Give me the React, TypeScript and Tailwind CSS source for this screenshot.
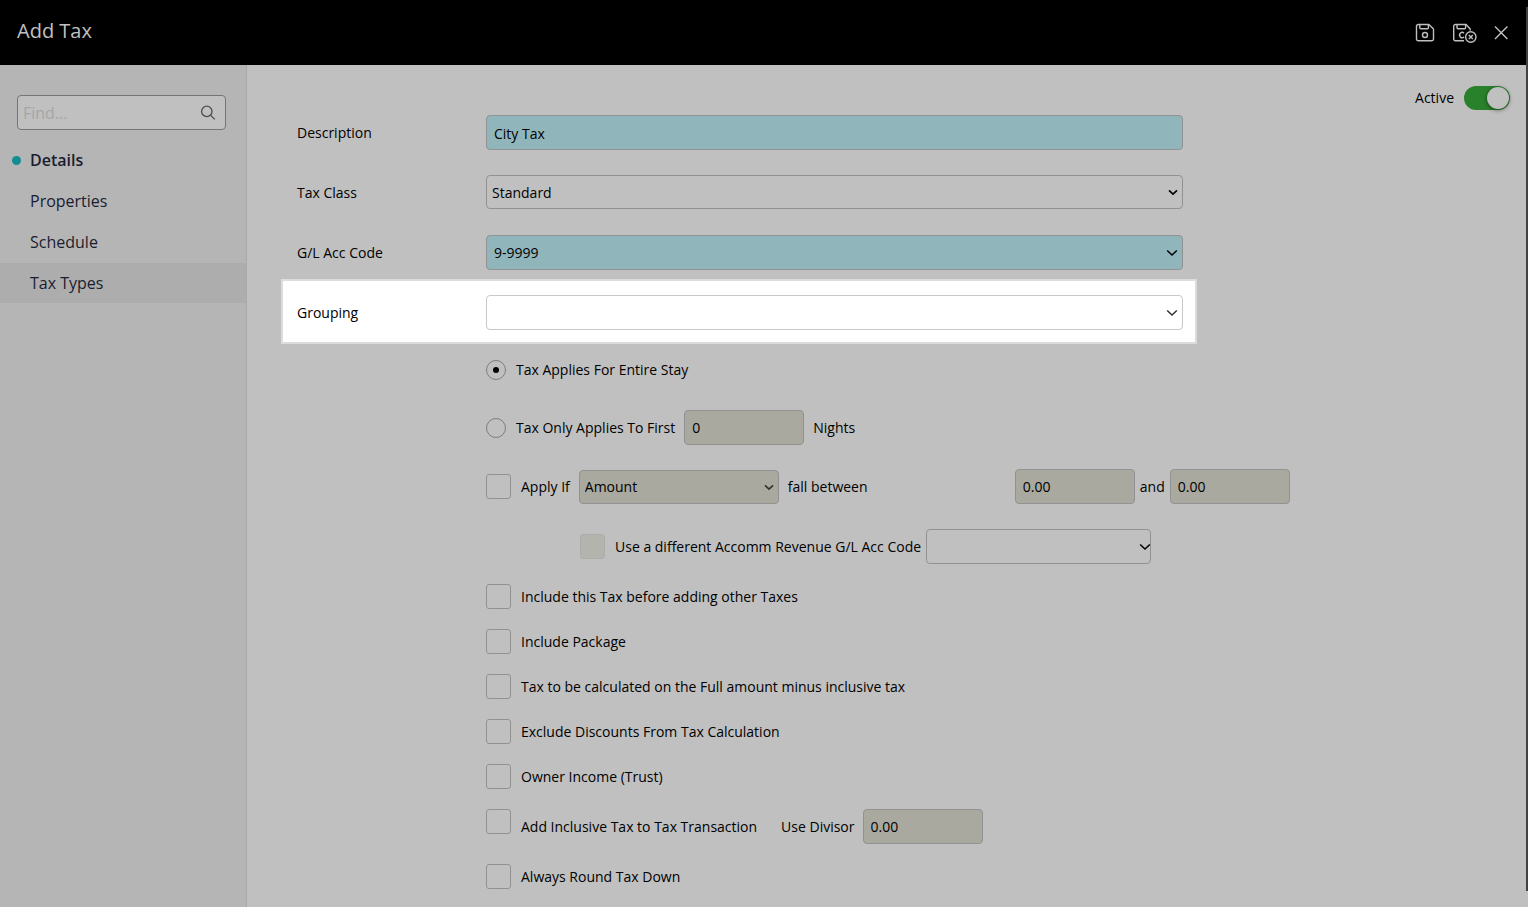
import React, { useState } from 'react';
import { clsx, type ClassValue } from 'clsx';
import { twMerge } from 'tailwind-merge';

function cn(...inputs: ClassValue[]) {
  return twMerge(clsx(inputs));
}

const navItems = ['Details', 'Properties', 'Schedule', 'Tax Types'];

const SaveIcon = () => (
  <svg className="w-5 h-5" viewBox="0 0 20 20" fill="none" stroke="currentColor" strokeWidth="1.4" strokeLinejoin="round">
    <path d="M3.3 1.5h10.6L18.5 6v10a1.8 1.8 0 0 1-1.8 1.8H3.3A1.8 1.8 0 0 1 1.5 16V3.3a1.8 1.8 0 0 1 1.8-1.8z" />
    <path d="M4.8 1.6v3.2a1 1 0 0 0 1 1h6.6a1 1 0 0 0 1-1V1.6" />
    <circle cx="10" cy="12" r="2.5" />
  </svg>
);

const SaveCloseIcon = () => (
  <svg className="w-6 h-5" viewBox="0 0 24 20" fill="none" stroke="currentColor" strokeWidth="1.4" strokeLinejoin="round">
    <path d="M11 17.8H2.5A1.8 1.8 0 0 1 .7 16V3.3a1.8 1.8 0 0 1 1.8-1.8h10.6L17.2 6v1.6" />
    <path d="M4 1.6v3.2a1 1 0 0 0 1 1h6.6a1 1 0 0 0 1-1V1.6" />
    <path d="M11 10.2a2.6 2.6 0 1 0 0 3.8" />
    <circle cx="17.8" cy="14" r="5.2" />
    <path d="M15.8 12l4 4M19.8 12l-4 4" />
  </svg>
);

const CloseIcon = () => (
  <svg className="w-4 h-4" viewBox="0 0 16 16" fill="none" stroke="currentColor" strokeWidth="1.4">
    <path d="M2 1.6l12.4 12.4M14.4 1.6L2 14" />
  </svg>
);

const SearchIcon = () => (
  <svg className="w-4 h-4" viewBox="0 0 16 16" fill="none" stroke="currentColor" strokeWidth="1.3">
    <circle cx="6.8" cy="6.4" r="5.2" />
    <path d="M10.5 10.1l4.3 4.3" />
  </svg>
);

interface SelectProps extends React.SelectHTMLAttributes<HTMLSelectElement> {
  wrapperClass?: string;
  arrowClass?: string;
  options: string[];
}

const Select: React.FC<SelectProps> = ({ wrapperClass, arrowClass, options, className, ...props }) => (
  <div className={cn('relative', wrapperClass)}>
    <select
      className={cn(
        'block w-full h-[35px] appearance-none rounded border border-[#929292] bg-transparent px-[7px] text-black',
        className
      )}
      {...props}
    >
      {options.map((option) => (
        <option key={option}>{option}</option>
      ))}
    </select>
    <svg
      className={cn('pointer-events-none absolute right-[5px] top-[14px] w-3 h-2', arrowClass)}
      viewBox="0 0 12 8"
      fill="none"
      stroke="currentColor"
      strokeWidth="1.5"
    >
      <path d="M1.2 1.5L6 6l4.8-4.5" />
    </svg>
  </div>
);

const smallArrow = 'w-[10px] h-[7px] stroke-2';

const NumberBox = (props: React.InputHTMLAttributes<HTMLInputElement>) => (
  <input
    type="text"
    className="w-[120px] h-[35px] rounded border border-[#929292] bg-[#a9a99f] px-[7px] text-black"
    {...props}
  />
);

const CheckBox = (props: React.InputHTMLAttributes<HTMLInputElement>) => (
  <input
    type="checkbox"
    className="w-[25px] h-[25px] flex-shrink-0 appearance-none rounded-[3px] border border-[#929292] checked:bg-[#148c93] disabled:border-[#adada9] disabled:bg-[#b4b4af]"
    {...props}
  />
);

const Radio = (props: React.InputHTMLAttributes<HTMLInputElement>) => (
  <input
    type="radio"
    name="applies"
    className="grid w-5 h-5 flex-shrink-0 appearance-none place-content-center rounded-full border border-[#7d7d7d] before:h-1.5 before:w-1.5 before:rounded-full checked:before:bg-black"
    {...props}
  />
);

const checkRows = [
  { id: 'before-other', label: 'Include this Tax before adding other Taxes' },
  { id: 'package', label: 'Include Package' },
  { id: 'full-amount', label: 'Tax to be calculated on the Full amount minus inclusive tax' },
  { id: 'exclude-discounts', label: 'Exclude Discounts From Tax Calculation' },
  { id: 'owner-income', label: 'Owner Income (Trust)' },
];

const CheckRow = ({ id, label }: { id: string; label: string }) => (
  <div className="flex items-center gap-[10px]">
    <CheckBox id={id} />
    <label htmlFor={id}>{label}</label>
  </div>
);

const Sidebar = () => {
  const [active, setActive] = useState('Details');

  return (
    <aside className="w-[247px] flex-shrink-0 border-r border-[#a9a9a9] bg-[#b5b5b5] pt-[30px] text-base text-[#1b1d30]">
      <div className="relative mb-[10px] pl-[17px] pr-5">
        <input
          type="search"
          aria-label="Find"
          placeholder="Find..."
          className="block w-full h-[35px] rounded border border-[#757575] bg-[#c0c0c0] pl-[5px] pr-9 placeholder:text-[#a6a6a6]"
        />
        <span className="pointer-events-none absolute right-[30px] top-[10px] text-[#4d4d4d]">
          <SearchIcon />
        </span>
      </div>
      <nav className="flex flex-col gap-px">
        {navItems.map((item) => (
          <button
            key={item}
            onClick={() => setActive(item)}
            className={cn(
              'flex h-10 items-center gap-[9px] pl-3 text-left',
              active === item && 'font-semibold',
              item === 'Tax Types' && 'bg-[#adadad]'
            )}
          >
            <span className={cn('h-[9px] w-[9px] rounded-full', active === item && 'bg-[#148c93]')} />
            {item}
          </button>
        ))}
      </nav>
    </aside>
  );
};

export default function App() {
  return (
    <div className="flex min-h-screen flex-col bg-[#c0c0c0] font-['Open_Sans',sans-serif] text-sm text-black">
      <header className="flex h-[65px] items-center justify-between bg-black pl-[17px] pr-[19px] text-[#c0c0c0]">
        <h1 className="pb-1 text-xl">Add Tax</h1>
        <div className="flex items-center gap-4">
          <button aria-label="Save" className="mr-0.5">
            <SaveIcon />
          </button>
          <button aria-label="Save and close">
            <SaveCloseIcon />
          </button>
          <button aria-label="Close">
            <CloseIcon />
          </button>
        </div>
      </header>

      <div className="flex flex-1">
        <Sidebar />

        <main className="min-w-0 flex-1 pb-[18px] pl-[50px] pr-[18px] pt-[21px]">
          <div className="mb-[5px] flex items-center justify-end gap-[10px]">
            <label htmlFor="active">Active</label>
            <input
              id="active"
              type="checkbox"
              role="switch"
              defaultChecked
              className="flex h-6 w-[46px] appearance-none items-center rounded-full bg-[#8a8a8a] px-px before:h-[22px] before:w-[22px] before:rounded-full before:bg-[#c0c0c0] before:shadow-[0_1px_4px_rgba(0,0,0,0.5)] checked:justify-end checked:bg-[#2a812b]"
            />
          </div>

          <form className="max-w-[993px]">
            <div className="flex max-w-[886px] flex-col gap-[25px]">
              <div className="flex items-center">
                <label htmlFor="description" className="w-[189px] flex-shrink-0">Description</label>
                <input
                  id="description"
                  type="text"
                  defaultValue="City Tax"
                  className="h-[35px] min-w-0 flex-1 rounded border border-[#929292] bg-[#90b6bb] px-[7px] pt-0.5"
                />
              </div>
              <div className="flex h-[35px] items-start">
                <label htmlFor="tax-class" className="w-[189px] flex-shrink-0 leading-[35px]">Tax Class</label>
                <Select
                  id="tax-class"
                  options={['Standard']}
                  wrapperClass="min-w-0 flex-1"
                  className="h-[34px] px-[5px] pt-px"
                  arrowClass={smallArrow}
                />
              </div>
              <div className="flex items-center">
                <label htmlFor="gl-code" className="w-[189px] flex-shrink-0">G/L Acc Code</label>
                <Select id="gl-code" options={['9-9999']} wrapperClass="min-w-0 flex-1" className="bg-[#90b6bb]" />
              </div>
            </div>

            <div className="-ml-4 mt-[9px] flex max-w-[916px] items-center border-2 border-[#dcdcdc] bg-white pb-3 pl-[14px] pr-3 pt-[14px]">
              <label htmlFor="grouping" className="w-[189px] flex-shrink-0">Grouping</label>
              <Select
                id="grouping"
                options={['']}
                wrapperClass="min-w-0 flex-1"
                className="border-[#c8c8c8]"
                arrowClass="text-[#333333]"
              />
            </div>

            <div className="flex flex-col pl-[189px] pt-4">
              <div className="mb-[30px] flex items-center gap-[10px]">
                <Radio id="entire-stay" defaultChecked />
                <label htmlFor="entire-stay">Tax Applies For Entire Stay</label>
              </div>
              <div className="mb-6 flex items-center">
                <Radio id="first-nights" />
                <label htmlFor="first-nights" className="ml-[10px] mr-[9px]">Tax Only Applies To First</label>
                <NumberBox id="nights" defaultValue="0" />
                <label htmlFor="nights" className="ml-[9px]">Nights</label>
              </div>
              <div className="mb-[25px] flex items-center">
                <CheckBox id="apply-if" />
                <label htmlFor="apply-if" className="ml-[10px] mr-[9px]">Apply If</label>
                <Select
                  aria-label="Apply if"
                  options={['Amount']}
                  wrapperClass="w-[200px]"
                  className="h-[34px] bg-[#a9a99f] px-[5px]"
                  arrowClass={cn(smallArrow, 'text-[#333333]')}
                />
                <label htmlFor="from" className="ml-[9px] w-[227px]">fall between</label>
                <NumberBox id="from" defaultValue="0.00" />
                <label htmlFor="to" className="w-[35px] text-center">and</label>
                <NumberBox id="to" defaultValue="0.00" />
              </div>
              <div className="mb-5 flex items-center pl-[94px]">
                <CheckBox id="different-code" disabled />
                <label htmlFor="different-code" className="ml-[10px] mr-[5px]">
                  Use a different Accomm Revenue G/L Acc Code
                </label>
                <Select
                  aria-label="Accomm Revenue G/L Acc Code"
                  options={['']}
                  wrapperClass="w-[225px]"
                  arrowClass="right-0"
                />
              </div>

              <div className="flex flex-col gap-5">
                {checkRows.map((row) => (
                  <CheckRow key={row.id} id={row.id} label={row.label} />
                ))}
                <div className="flex items-start leading-[35px]">
                  <CheckBox id="add-inclusive" />
                  <label htmlFor="add-inclusive" className="ml-[10px] mr-6">Add Inclusive Tax to Tax Transaction</label>
                  <label htmlFor="divisor" className="mr-2">Use Divisor</label>
                  <NumberBox id="divisor" defaultValue="0.00" />
                </div>
                <CheckRow id="round-down" label="Always Round Tax Down" />
              </div>
            </div>
          </form>
        </main>
      </div>

      {/* scroll thumb along the window edge */}
      <div className="fixed bottom-4 right-0 top-[7px] w-0.5 bg-[#424242]" />
    </div>
  );
}
